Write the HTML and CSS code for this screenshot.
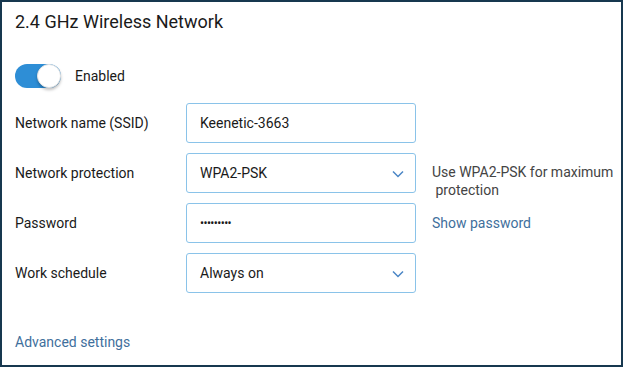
FILE: index.html
```html
<!DOCTYPE html>
<html lang="en">
<head>
  <meta charset="UTF-8">
  <title>2.4 GHz Wireless Network</title>
  <link rel="stylesheet" href="styles.css">
</head>
<body>
  <div class="panel">
    <h2 class="title">2.4 GHz Wireless Network</h2>

    <!-- On/off switch -->
    <label class="switch-row">
      <span class="switch on"><span class="knob"></span></span>
      <span class="switch-label">Enabled</span>
    </label>

    <!-- Settings form -->
    <div class="form">
      <div class="label">Network name (SSID)</div>
      <div class="field">Keenetic-3663</div>
      <div class="hint"></div>

      <div class="label">Network protection</div>
      <div class="field select">
        <span>WPA2-PSK</span>
        <svg class="chevron" width="12" height="8" viewBox="0 0 12 8"><path d="M1 1.5l5 5 5-5" fill="none" stroke="#4a86c5" stroke-width="1.5"/></svg>
      </div>
      <div class="hint help">Use WPA2-PSK for maximum<br>&nbsp;protection</div>

      <div class="label">Password</div>
      <div class="field password">•••••••••</div>
      <div class="hint"><a class="link">Show password</a></div>

      <div class="label">Work schedule</div>
      <div class="field select">
        <span>Always on</span>
        <svg class="chevron" width="12" height="8" viewBox="0 0 12 8"><path d="M1 1.5l5 5 5-5" fill="none" stroke="#4a86c5" stroke-width="1.5"/></svg>
      </div>
      <div class="hint"></div>
    </div>

    <a class="link advanced">Advanced settings</a>
  </div>
</body>
</html>
```

FILE: styles.css
```css
:root {
  --frame: #17384f;
  --field-border: #8ac3e9;
  --blue: #2e8ed6;
  --link: #3f6f9c;
  --text: #1a1a1a;
}
* { box-sizing: border-box; margin: 0; padding: 0; }
html, body { height: 100%; }
body {
  font-family: Roboto, "Liberation Sans", sans-serif;
  color: var(--text);
  background: #fff;
}
.panel {
  height: 367px;
  border: 2px solid var(--frame);
  padding: 8px 0 0 13px;
}

.title {
  font-size: 18px; font-weight: 400;
  line-height: 24px;
}

.switch-row {
  display: flex; align-items: center; gap: 14px;
  margin-top: 30px; height: 24px;
}
.switch {
  width: 46px; height: 24px; border-radius: 12px;
  background: var(--blue); position: relative;
}
.switch .knob {
  position: absolute; right: 0; top: 0;
  width: 24px; height: 24px; border-radius: 50%;
  background: #fff; border: 1px solid #e3e3e3;
  box-shadow: 0 2px 3px rgba(0,0,0,.25);
}
.switch-label { font-size: 14px; }

.form {
  display: grid;
  grid-template-columns: 155px 230px auto;
  grid-auto-rows: 40px;
  row-gap: 10px;
  column-gap: 16px;
  margin-top: 15px;
  font-size: 14px;
}
.label { display: flex; align-items: center; }
.field {
  border: 1px solid var(--field-border);
  border-radius: 3px;
  display: flex; align-items: center; justify-content: space-between;
  padding: 0 11px 0 13px;
}
.field.password { font-size: 12px; letter-spacing: -0.6px; }
.chevron { display: block; margin-top: 1px; }
.hint { display: flex; align-items: center; }
.hint.help {
  align-items: flex-start;
  padding-top: 10px;
  line-height: 18px;
  color: #444;
  white-space: nowrap;
}
.link { color: var(--link); cursor: pointer; }

.advanced {
  display: block; font-size: 14px;
  margin-top: 41px;
}
```
